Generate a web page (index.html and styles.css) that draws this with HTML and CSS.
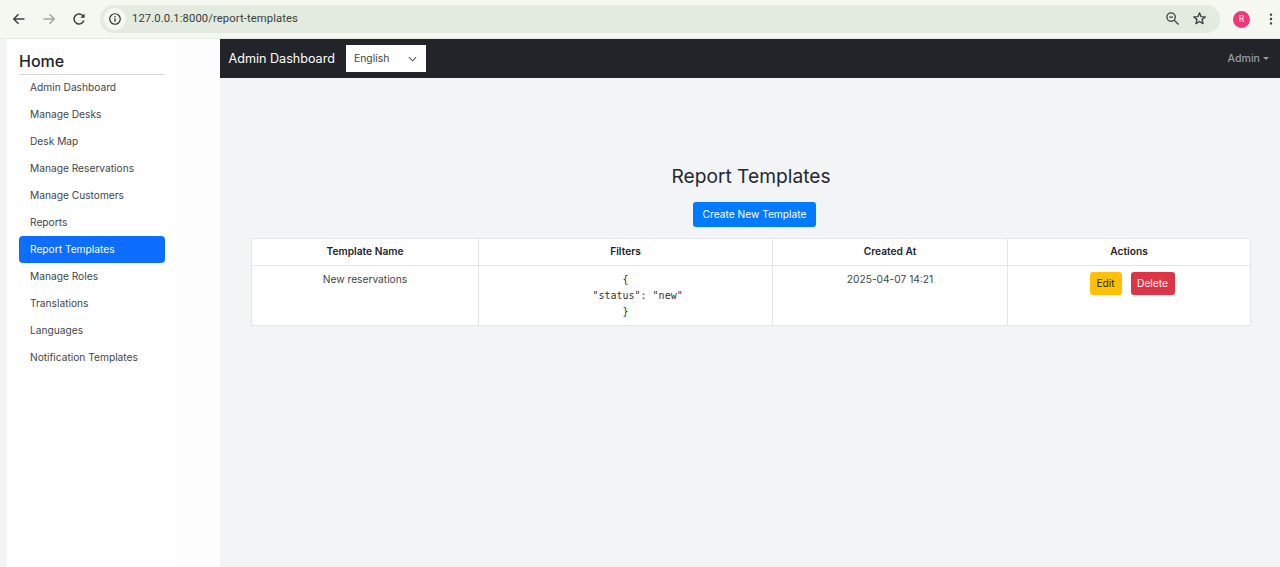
FILE: index.html
```html
<!DOCTYPE html>
<html lang="en">
<head>
<meta charset="utf-8">
<title>Report Templates</title>
<link rel="stylesheet" href="styles.css">
</head>
<body>
<header class="chrome">
  <div class="chrome-nav">
    <svg class="ci" viewBox="0 0 16 16"><path d="M13.5 8H3M7.5 3.2 2.8 8l4.7 4.8" fill="none" stroke="#3c4043" stroke-width="1.5"/></svg>
    <svg class="ci" viewBox="0 0 16 16"><path d="M2.5 8H13M8.5 3.2 13.2 8l-4.7 4.8" fill="none" stroke="#a3a6a3" stroke-width="1.5"/></svg>
    <svg class="ci" viewBox="0 0 16 16"><path d="M12.8 9.5A5 5 0 1 1 11.6 4.5L13 6" fill="none" stroke="#3c4043" stroke-width="1.5"/><path d="M13.6 2.4v4.4H9.2z" fill="#3c4043"/></svg>
  </div>
  <div class="omnibox">
    <span class="info-chip"><svg viewBox="0 0 16 16" width="14" height="14"><circle cx="8" cy="8" r="6" fill="none" stroke="#2f3230" stroke-width="1.4"/><path d="M8 7.2v4M8 4.6v1.4" stroke="#2f3230" stroke-width="1.5"/></svg></span>
    <span class="url">127.0.0.1:8000/report-templates</span>
    <span class="omni-end">
      <svg class="oi" viewBox="0 0 16 16"><circle cx="6.5" cy="6.5" r="4.5" fill="none" stroke="#3c4043" stroke-width="1.4"/><path d="M4.5 6.5h4M10 10l4.5 4.5" stroke="#3c4043" stroke-width="1.5" fill="none"/></svg>
      <svg class="oi" viewBox="0 0 16 16"><path d="m8 2 1.7 4.1 4.4.3-3.4 2.8 1.1 4.3L8 11.2l-3.8 2.3 1.1-4.3-3.4-2.8 4.4-.3z" fill="none" stroke="#3c4043" stroke-width="1.4" stroke-linejoin="round"/></svg>
    </span>
  </div>
  <span class="avatar">R</span>
  <svg class="dots" viewBox="0 0 4 16"><circle cx="2" cy="3" r="1.4"/><circle cx="2" cy="8" r="1.4"/><circle cx="2" cy="13" r="1.4"/></svg>
</header>
<div class="app">
  <aside class="sidebar">
    <h2 class="side-title">Home</h2>
    <nav class="side-nav">
      <a class="side-link">Admin Dashboard</a>
      <a class="side-link">Manage Desks</a>
      <a class="side-link">Desk Map</a>
      <a class="side-link">Manage Reservations</a>
      <a class="side-link">Manage Customers</a>
      <a class="side-link">Reports</a>
      <a class="side-link active">Report Templates</a>
      <a class="side-link">Manage Roles</a>
      <a class="side-link">Translations</a>
      <a class="side-link">Languages</a>
      <a class="side-link">Notification Templates</a>
    </nav>
  </aside>
  <div class="gutter"></div>
  <main class="main">
    <div class="topbar">
      <span class="brand">Admin Dashboard</span>
      <div class="lang">English<svg viewBox="0 0 10 6" width="9" height="6"><path d="M1 1l4 4 4-4" fill="none" stroke="#555" stroke-width="1.2"/></svg></div>
      <span class="admin">Admin<i class="caret"></i></span>
    </div>
    <section class="content">
      <h1 class="page-title">Report Templates</h1>
      <div class="create-row"><a class="btn btn-primary">Create New Template</a></div>
      <table class="table">
        <colgroup><col class="c1"><col class="c2"><col class="c3"><col class="c4"></colgroup>
        <thead><tr><th>Template Name</th><th>Filters</th><th>Created At</th><th>Actions</th></tr></thead>
        <tbody><tr>
          <td>New reservations</td>
          <td class="mono">{
    "status": "new"
}</td>
          <td>2025-04-07 14:21</td>
          <td class="actions"><a class="btn btn-warning">Edit</a><a class="btn btn-danger">Delete</a></td>
        </tr></tbody>
      </table>
    </section>
  </main>
</div>
</body>
</html>
```
FILE: styles.css
```css
* { box-sizing: border-box; }
html, body { height: 100%; }
body {
  margin: 0;
  height: 567px;
  overflow: hidden;
  font-family: Inter, "Noto Sans", sans-serif;
  background: #f3f4f6;
  color: #212529;
}
.chrome {
  height: 39px;
  background: #f4f8f0;
  border-bottom: 1px solid #e6ebe2;
  display: flex;
  align-items: center;
}
.chrome-nav { display: flex; gap: 14px; padding-left: 10.5px; width: 100px; flex: none; }
.ci { width: 16px; height: 16px; flex: none; }
.omnibox {
  flex: none;
  width: 1120px;
  height: 28px;
  margin-top: -1px;
  border-radius: 14px;
  background: #e3eadf;
  display: flex;
  align-items: center;
  padding-left: 4px;
}
.info-chip {
  width: 22px; height: 22px; border-radius: 50%;
  background: #f4f8f0;
  display: flex; align-items: center; justify-content: center;
}
.url { margin-left: 6px; font: 11.25px Roboto, sans-serif; color: #3a3d3a; letter-spacing: .1px; }
.omni-end { margin-left: auto; display: flex; gap: 12px; padding-right: 13px; }
.oi { width: 15px; height: 15px; }
.avatar {
  flex: none;
  width: 17px; height: 17px; border-radius: 50%;
  margin-left: 13px;
  background: #f1377a; color: #fff;
  font: 9px/17px Roboto, sans-serif;
  text-align: center;
}
.dots { flex: none; width: 4px; height: 14px; margin-left: 19px; fill: #3c4043; }

.app { display: flex; height: 528px; padding-left: 7px; }
.sidebar { width: 169px; background: #fff; padding: 11px 11px 0 12px; }
.gutter { width: 44px; background: #fdfdfd; }
.side-title {
  margin: 0 0 -1px;
  height: 25px;
  font-size: 16px;
  line-height: 23px;
  font-weight: 500;
  border-bottom: 1px solid #d8dadc;
}
.side-nav { display: flex; flex-direction: column; }
.side-link {
  height: 27px;
  padding-left: 11px;
  border-radius: 4px;
  font-size: 10.2px;
  line-height: 27px;
  color: #3f454b;
}
.side-link.active { background: #0d6efd; color: #fff; }
.main { flex: 1; min-width: 0; }
.topbar {
  height: 39px;
  background: #212529;
  display: flex;
  align-items: center;
  padding: 0 11px 0 8.5px;
}
.brand { color: #fff; font-size: 12.6px; font-weight: 400; }
.lang {
  width: 80px; height: 27px;
  margin-left: 11px;
  background: #fff;
  color: #444;
  font-size: 10.4px;
  display: flex; align-items: center; justify-content: space-between;
  padding: 0 9px 0 8px;
}
.admin { margin-left: auto; color: #9a9da0; font-size: 10.6px; font-weight: 500; display: flex; align-items: center; }
.caret {
  margin-left: 3px;
  border-top: 3px solid #9a9da0;
  border-left: 3px solid transparent;
  border-right: 3px solid transparent;
}
.content { padding: 86px 29px 0 31px; }
.page-title {
  margin: 0 0 13px;
  text-align: center;
  font-size: 19.2px;
  line-height: 25px;
  font-weight: 400;
  color: #25292d;
}
.create-row { text-align: center; height: 36px; padding-left: 7px; }
.btn {
  display: inline-block;
  border-radius: 3px;
  font-size: 10.2px;
  color: #fff;
  text-align: center;
}
.btn-primary { background: #007bff; width: 123px; height: 25px; line-height: 25px; }
.btn-warning { background: #ffc107; color: #212529; width: 32px; height: 23px; line-height: 23px; }
.btn-danger { background: #dc3545; width: 44px; height: 23px; line-height: 23px; margin-left: 9px; }
.table {
  width: 999px;
  table-layout: fixed;
  border-collapse: collapse;
  background: #fff;
}
.c1 { width: 227px; }
.c2 { width: 294px; }
.c3 { width: 235px; }
.c4 { width: 243px; }
th, td {
  border: 1px solid #e3e5e8;
  text-align: center;
  vertical-align: top;
  font-size: 10.2px;
  color: #3f454b;
}
th { height: 27px; line-height: 25px; font-weight: 600; color: #212529; padding: 0; }
td { height: 60px; padding: 5px 0 0; line-height: 16px; }
td.mono { font: 10px/16px "DejaVu Sans Mono", monospace; color: #333; white-space: pre-wrap; padding-top: 6px; }
td.actions { line-height: 0; padding: 6px 0 0 6px; }
```
